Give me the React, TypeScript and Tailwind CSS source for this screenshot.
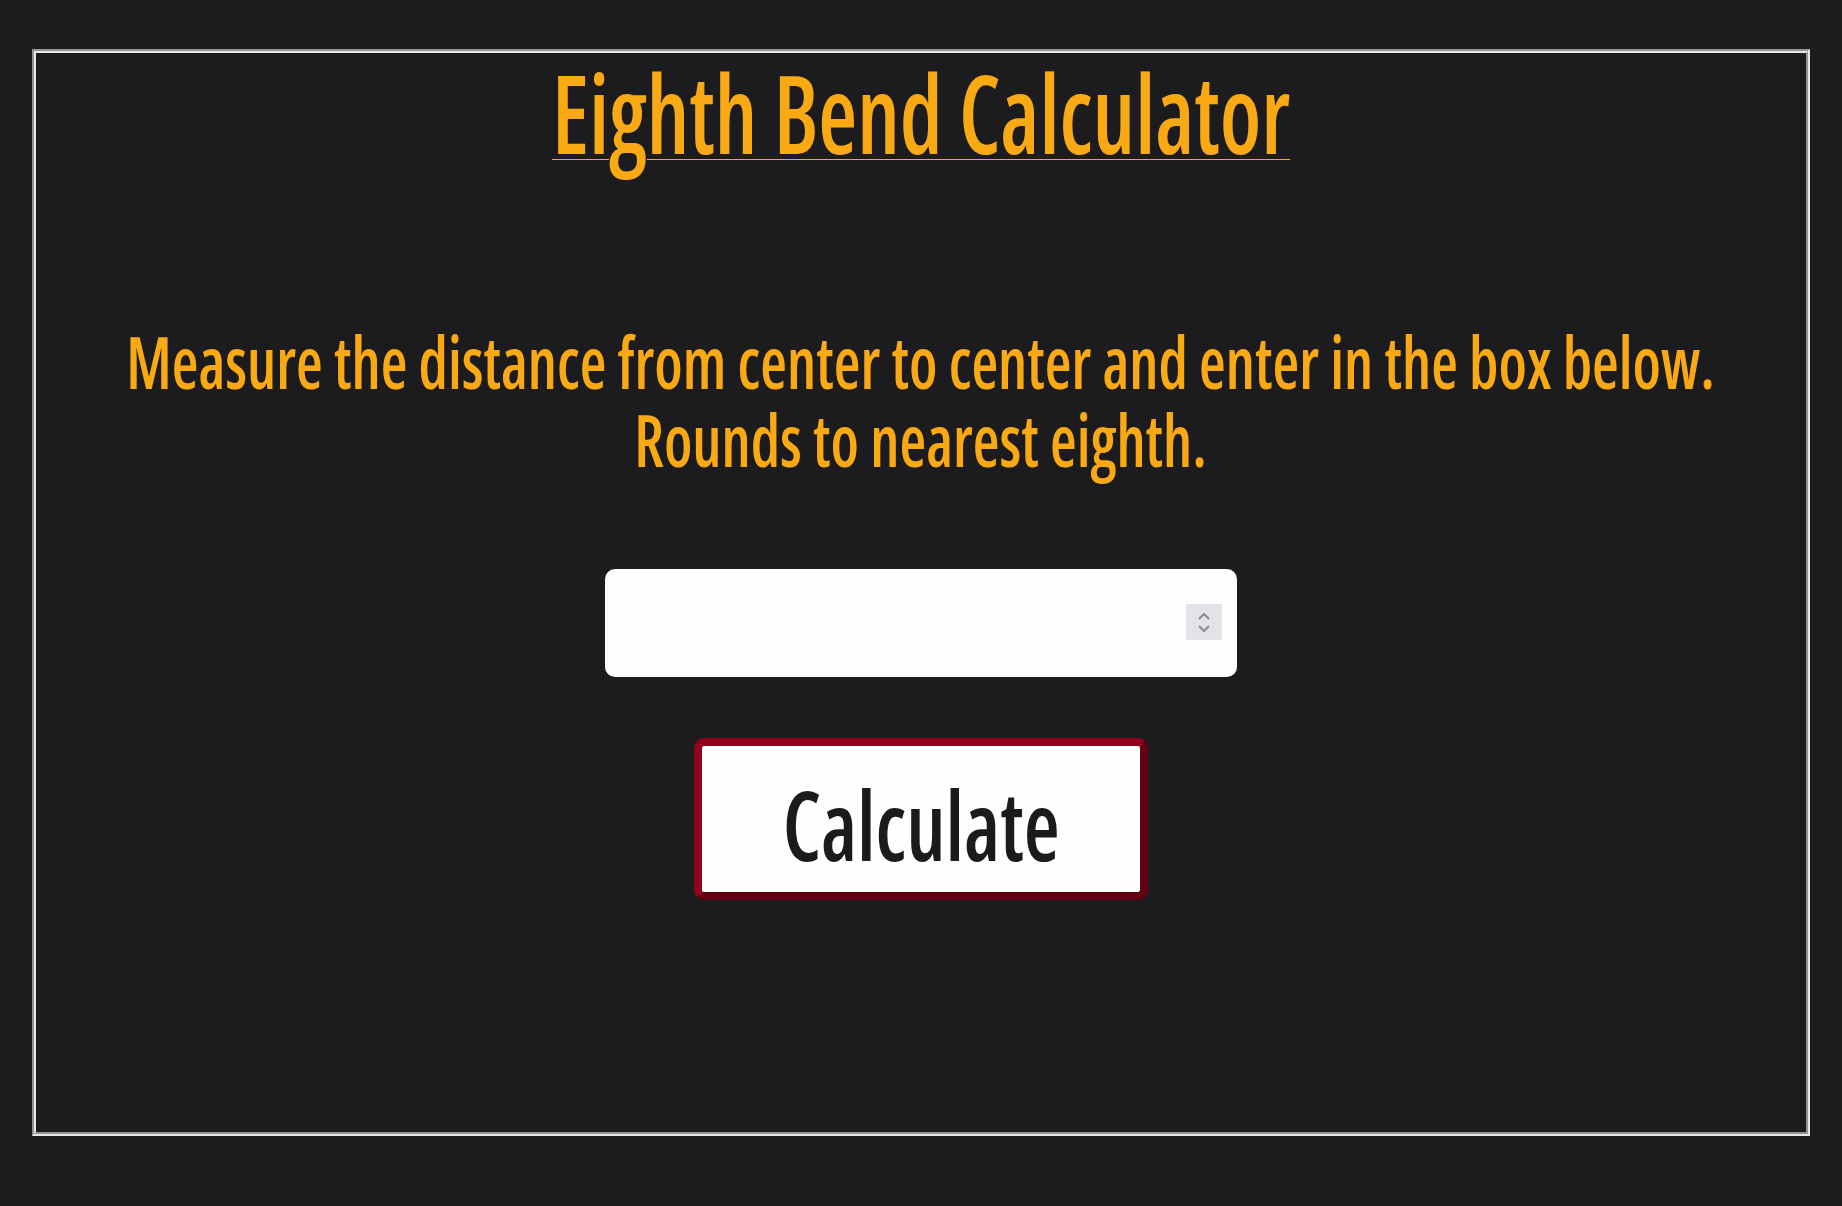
import React, { useState } from 'react';

const condensed = { fontFamily: '"Open Sans", "Noto Sans", sans-serif', fontStretch: '75%' } as const;

export default function App() {
  const [value, setValue] = useState('');

  return (
    <div className="min-h-screen bg-[#1c1c1e] px-8 pt-[49px] pb-[70px]" style={condensed}>
      <div className="flex h-[1087px] flex-col items-center overflow-hidden border-4 border-[#e8e8e8] [border-style:groove]">
        <h1 className="mt-[4px] inline-block scale-x-82 pb-[6px] text-[109px] font-semibold leading-none whitespace-nowrap text-[#f9a913] underline decoration-1 underline-offset-[5px]">
          Eighth Bend Calculator
        </h1>

        <p className="mt-[150px] scale-x-84 text-center text-[73px] font-semibold leading-[78px] whitespace-nowrap text-[#f9a913]">
          Measure the distance from center to center and enter in the box below.
          <br />
          Rounds to nearest eighth.
        </p>

        <div className="relative mt-[91px]">
          <input
            type="number"
            value={value}
            onChange={(e) => setValue(e.target.value)}
            className="h-[108px] w-[632px] rounded-[10px] bg-[#fbfefd] px-5 text-4xl text-[#1c1c1e] outline-none [appearance:textfield]"
          />
          {/* spinner, drawn since the native one only shows on hover */}
          <div className="pointer-events-none absolute top-[35px] right-[15px] flex h-[36px] w-[36px] flex-col items-center justify-center gap-[5px] bg-[#e4e2e8]">
            <svg width="12" height="7" viewBox="0 0 12 7" fill="none" stroke="#8e8c98" strokeWidth="2.2">
              <path d="M1 6l5-5 5 5" />
            </svg>
            <svg width="12" height="7" viewBox="0 0 12 7" fill="none" stroke="#8e8c98" strokeWidth="2.2">
              <path d="M1 1l5 5 5-5" />
            </svg>
          </div>
        </div>

        <button
          type="button"
          className="mt-[61px] flex h-[162px] w-[454px] items-center justify-center rounded-[10px] border-8 border-t-[#93001c] border-r-[#650012] border-b-[#650012] border-l-[#93001c] bg-[#fdfffe] pt-[10px]"
        >
          <span className="inline-block scale-x-87 text-[95px] font-semibold leading-none text-[#1b1b1d]">Calculate</span>
        </button>
      </div>
    </div>
  );
}
